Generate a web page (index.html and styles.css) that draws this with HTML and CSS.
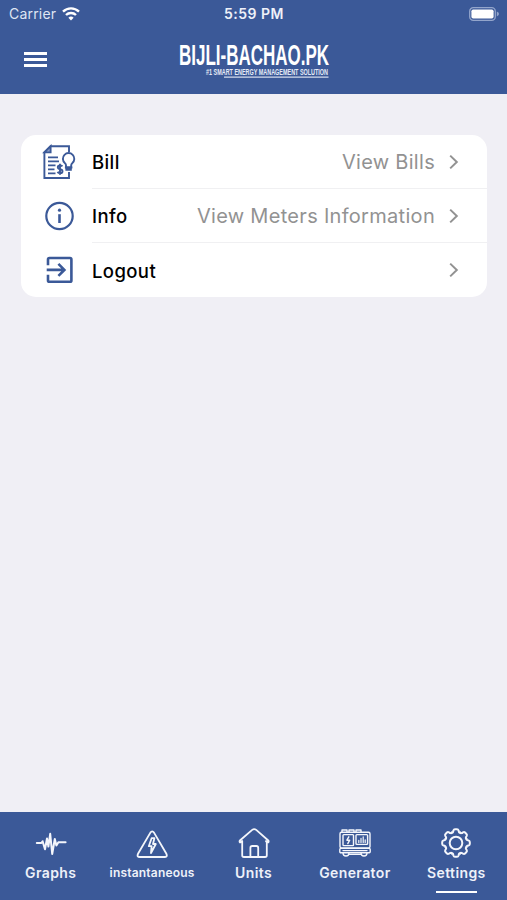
FILE: index.html
```html
<!DOCTYPE html>
<html lang="en">
<head>
    <meta charset="UTF-8">
    <meta name="viewport" content="width=device-width, initial-scale=1.0">
    <title>Settings</title>
    <link rel="stylesheet" href="styles.css">
</head>
<body>
    <div class="app">
        <header class="header">
            <!-- Status bar -->
            <div class="status-bar">
                <div class="carrier">
                    <span>Carrier</span>
                    <svg width="18" height="14" viewBox="0 0 18 14" fill="none" stroke="#fff" stroke-width="2.4">
                        <path d="M1 4.6a11.6 11.6 0 0 1 16 0"/>
                        <path d="M4 8a7.2 7.2 0 0 1 10 0"/>
                        <path d="M9 13.6l-2.6-2.9a3.8 3.8 0 0 1 5.2 0z" fill="#fff" stroke="none"/>
                    </svg>
                </div>
                <div class="time">5:59 PM</div>
                <svg class="battery" width="31" height="14" viewBox="0 0 31 14">
                    <rect x=".7" y=".7" width="25.6" height="12.6" rx="3.6" fill="none" stroke="#93a5cb" stroke-width="1.3"/>
                    <rect x="2.4" y="2.4" width="22.2" height="9.2" rx="1.8" fill="#fff"/>
                    <path d="M27.8 4.6q2.2 1 2.2 2.4t-2.2 2.4z" fill="#93a5cb"/>
                </svg>
            </div>

            <div class="title-bar">
                <button class="menu-button" aria-label="Menu">
                    <span></span>
                    <span></span>
                    <span></span>
                </button>
                <svg class="logo" width="152" height="38" viewBox="0 0 152 38">
                    <text class="logo-name" x="0" y="24.6" textLength="150" lengthAdjust="spacingAndGlyphs">BIJLI-BACHAO.PK</text>
                    <text class="logo-tag" x="27" y="35" textLength="122" lengthAdjust="spacingAndGlyphs">#1 SMART ENERGY MANAGEMENT SOLUTION</text>
                    <path d="M45 37.1H149.5" stroke="#d5dced" stroke-width="1.4"/>
                </svg>
            </div>
        </header>

        <main class="content">
            <ul class="list">
                <!-- Bill -->
                <li class="item">
                    <svg class="item-icon" width="34" height="36" viewBox="0 0 34 36" fill="none" stroke="#3b5998" stroke-width="1.9">
                        <path d="M27 8V2.2H8.6L2.4 8.4V34H27V28"/>
                        <path d="M2.4 8.4H8.6V2.2z" fill="#8c9dc3"/>
                        <path d="M6 13.4H16M6 17.4H17M6 21.4H13.5M6 25.4H12.5M6 29.4H13.5"/>
                        <path d="M20.4 22.4q-.8-1-2.4-1-2.2 0-2.2 1.8 0 1.4 2.3 1.9 2.4.5 2.4 2.1 0 1.9-2.3 1.9-1.9 0-2.7-1.2M18 19.8v11"/>
                        <path d="M24 23.4v-2.2q0-1.2-1.2-2.2a5.7 5.7 0 1 1 7.6 0q-1.2 1-1.2 2.2v2.2z" fill="#fff"/>
                        <path d="M22.9 23.5h7.4M23.4 25.7h6.4" stroke-width="2.2"/>
                    </svg>
                    <div class="item-row">
                        <span class="label">Bill</span>
                        <span class="value">View Bills</span>
                        <svg class="chevron" width="10" height="16" viewBox="0 0 10 16"><path d="M1.2 1.6L7.8 8L1.2 14.4"/></svg>
                    </div>
                </li>

                <!-- Info -->
                <li class="item">
                    <svg class="item-icon" width="34" height="36" viewBox="0 0 34 36" fill="none" stroke="#3b5998" stroke-width="2.2">
                        <circle cx="17.5" cy="18" r="13.2"/>
                        <path d="M17.5 16.2V25" stroke-width="2.6"/>
                        <circle cx="17.5" cy="12.2" r="1.6" fill="#3b5998" stroke="none"/>
                    </svg>
                    <div class="item-row">
                        <span class="label">Info</span>
                        <span class="value">View Meters Information</span>
                        <svg class="chevron" width="10" height="16" viewBox="0 0 10 16"><path d="M1.2 1.6L7.8 8L1.2 14.4"/></svg>
                    </div>
                </li>

                <!-- Logout -->
                <li class="item">
                    <svg class="item-icon" width="34" height="36" viewBox="0 0 34 36" fill="none" stroke="#3b5998" stroke-width="2.6">
                        <path d="M6 13.2V7.4Q6 6 7.4 6H28Q29.4 6 29.4 7.4V28.4Q29.4 29.8 28 29.8H7.4Q6 29.8 6 28.4V22.8"/>
                        <path d="M4.7 17.9H22M16.4 11.9L22.4 17.9L16.4 23.9"/>
                    </svg>
                    <div class="item-row">
                        <span class="label">Logout</span>
                        <span class="value"></span>
                        <svg class="chevron" width="10" height="16" viewBox="0 0 10 16"><path d="M1.2 1.6L7.8 8L1.2 14.4"/></svg>
                    </div>
                </li>
            </ul>
        </main>

        <!-- Bottom tabs -->
        <nav class="tabs">
            <a class="tab">
                <svg width="32" height="32" viewBox="0 0 32 32" stroke-width="2">
                    <path d="M1.8 16H6.4L7.6 14.2L10 22.2L12 11.5L13.4 19.5L15.2 6.8L17.2 27L19.8 12L21.4 18.6L23.4 15.2H30.6"/>
                </svg>
                <span>Graphs</span>
            </a>
            <a class="tab tab-small">
                <svg width="32" height="32" viewBox="0 0 32 32" stroke-width="1.8">
                    <path d="M14.4 5.6Q16.2 3 18 5.6L30.4 26.8Q31.8 30 28.4 30H3.8Q.6 30 2 26.8Z"/>
                    <path d="M15.6 11.2L12.8 19.2H15.6L15 26L19.8 17H17L18.4 11.2Z"/>
                </svg>
                <span>instantaneous</span>
            </a>
            <a class="tab">
                <svg width="32" height="32" viewBox="0 0 32 32" stroke-width="1.8">
                    <path d="M4.2 14.2L2.9 15.3Q2 15.7 1.6 14.8Q1.4 14 2.2 13.3L14.2 2.9Q16.2 1.4 18.2 2.9L30 13.3Q30.8 14 30.6 14.8Q30.2 15.7 29.3 15.3L28 14.2"/>
                    <path d="M4.2 14.5V28.2Q4.2 30 6 30H27Q28.8 30 28.8 28.2V14.5"/>
                    <path d="M12.4 30V20.8Q12.4 19 14.2 19H18.4Q20.2 19 20.2 20.8V30"/>
                </svg>
                <span>Units</span>
            </a>
            <a class="tab">
                <svg width="34" height="32" viewBox="0 0 34 32" stroke-width="1.4">
                    <path d="M4 5V3H9V5M11 5V3H16V5M18 5V3H23V5"/>
                    <rect x="2" y="5.2" width="30" height="15.8" rx="1.5"/>
                    <rect x="5" y="7.6" width="10.5" height="11" rx=".8"/>
                    <rect x="18" y="7.6" width="11.6" height="9.8" rx=".8"/>
                    <path d="M10.8 9.8L8.9 13.2H11.7L9.8 16.6"/>
                    <path d="M20.8 15.4V13.4M23 15.4V11.4M25.2 15.4V9.8M27.2 15.4V12.8" stroke-width="1.2"/>
                    <rect x="1.8" y="21.4" width="30.4" height="4.4" rx="1"/>
                    <path d="M5 23.6H29M5 26C5 30 11 30 11 26M23 26C23 30 29 30 29 26M11 27.4H23"/>
                </svg>
                <span>Generator</span>
            </a>
            <a class="tab">
                <svg width="32" height="32" viewBox="-16 -16 32 32" stroke-width="2">
                    <defs>
                        <path id="tooth" d="M-4.3 -10.4C-3.1 -9.9 -2.8 -11.4 -2.6 -12.5Q-2.2 -13.8 -1 -13.8H1Q2.2 -13.8 2.6 -12.5C2.8 -11.4 3.1 -9.9 4.3 -10.4"/>
                    </defs>
                    <use href="#tooth"/>
                    <use href="#tooth" transform="rotate(45)"/>
                    <use href="#tooth" transform="rotate(90)"/>
                    <use href="#tooth" transform="rotate(135)"/>
                    <use href="#tooth" transform="rotate(180)"/>
                    <use href="#tooth" transform="rotate(225)"/>
                    <use href="#tooth" transform="rotate(270)"/>
                    <use href="#tooth" transform="rotate(315)"/>
                    <circle r="6.3"/>
                </svg>
                <span class="active">Settings</span>
            </a>
        </nav>
    </div>
</body>
</html>
```
FILE: styles.css
```css
body {
    font-family: Inter, 'Liberation Sans', sans-serif;
    margin: 0;
    padding: 0;
    background-color: #f0eff5;
}

.app {
    display: flex;
    flex-direction: column;
    height: 900px;
}

.header {
    height: 94px;
    background-color: #3b5998;
    color: #fff;
}

/* Status bar */
.status-bar {
    display: grid;
    grid-template-columns: 1fr auto 1fr;
    align-items: center;
    height: 27px;
    padding: 0 7px 0 9px;
    font-size: 14px;
}

.carrier {
    display: flex;
    align-items: center;
    gap: 6px;
    color: #dfe5f3;
    letter-spacing: 0.2px;
}

.time {
    margin-right: 1px;
    font-weight: 600;
    letter-spacing: 0.5px;
    color: #eef1f9;
}

.battery {
    justify-self: end;
}

.title-bar {
    display: flex;
    align-items: center;
    padding: 13px 0 0 24px;
}

.menu-button {
    display: flex;
    flex-direction: column;
    gap: 3px;
    width: 23px;
    margin-right: 132px;
    padding: 0;
    background: none;
    border: none;
}

.menu-button span {
    height: 3px;
    background-color: #fff;
}

.logo {
    overflow: visible;
    fill: #fff;
    font-family: 'Liberation Sans', sans-serif;
    font-weight: bold;
}

.logo-name {
    font-size: 29px;
}

.logo-tag {
    font-size: 9px;
    fill: #e6ebf6;
}

/* Settings list */
.content {
    flex: 1;
    padding: 41px 20px 0 21px;
}

.list {
    margin: 0;
    padding: 0;
    list-style: none;
    background-color: #fff;
    border-radius: 15px;
}

.item {
    display: flex;
    align-items: center;
    height: 54px;
    padding-left: 21px;
}

.item-icon {
    margin-right: 16px;
}

.item-row {
    display: flex;
    flex: 1;
    align-items: center;
    box-sizing: border-box;
    height: 100%;
    padding-right: 28px;
    border-bottom: 1px solid #f0f0f2;
}

.item:last-child .item-row {
    border-bottom: none;
}

.label {
    padding-top: 1px;
    font-size: 18.5px;
    font-weight: 500;
    letter-spacing: 0.4px;
    color: #000;
}

.value {
    flex: 1;
    margin-right: 14px;
    padding-top: 1px;
    font-size: 20px;
    letter-spacing: 0.3px;
    text-align: right;
    color: #929292;
}

.chevron {
    fill: none;
    stroke: #929292;
    stroke-width: 2;
}

/* Bottom tabs */
.tabs {
    display: flex;
    height: 88px;
    background-color: #3b5998;
}

.tab {
    display: flex;
    flex: 1;
    flex-direction: column;
    align-items: center;
    padding-top: 15px;
    font-size: 14px;
    font-weight: 600;
    line-height: 20px;
    letter-spacing: 0.4px;
    color: #eef1f9;
}

.tab svg {
    margin-bottom: 4px;
    fill: none;
    stroke: #f4f6fb;
    stroke-linecap: round;
    stroke-linejoin: round;
}

.tab-small {
    font-size: 12px;
    letter-spacing: 0.2px;
}

.active::after {
    content: "";
    display: block;
    width: 41px;
    height: 2px;
    margin: 8px auto 0;
    background-color: #fff;
}
```
